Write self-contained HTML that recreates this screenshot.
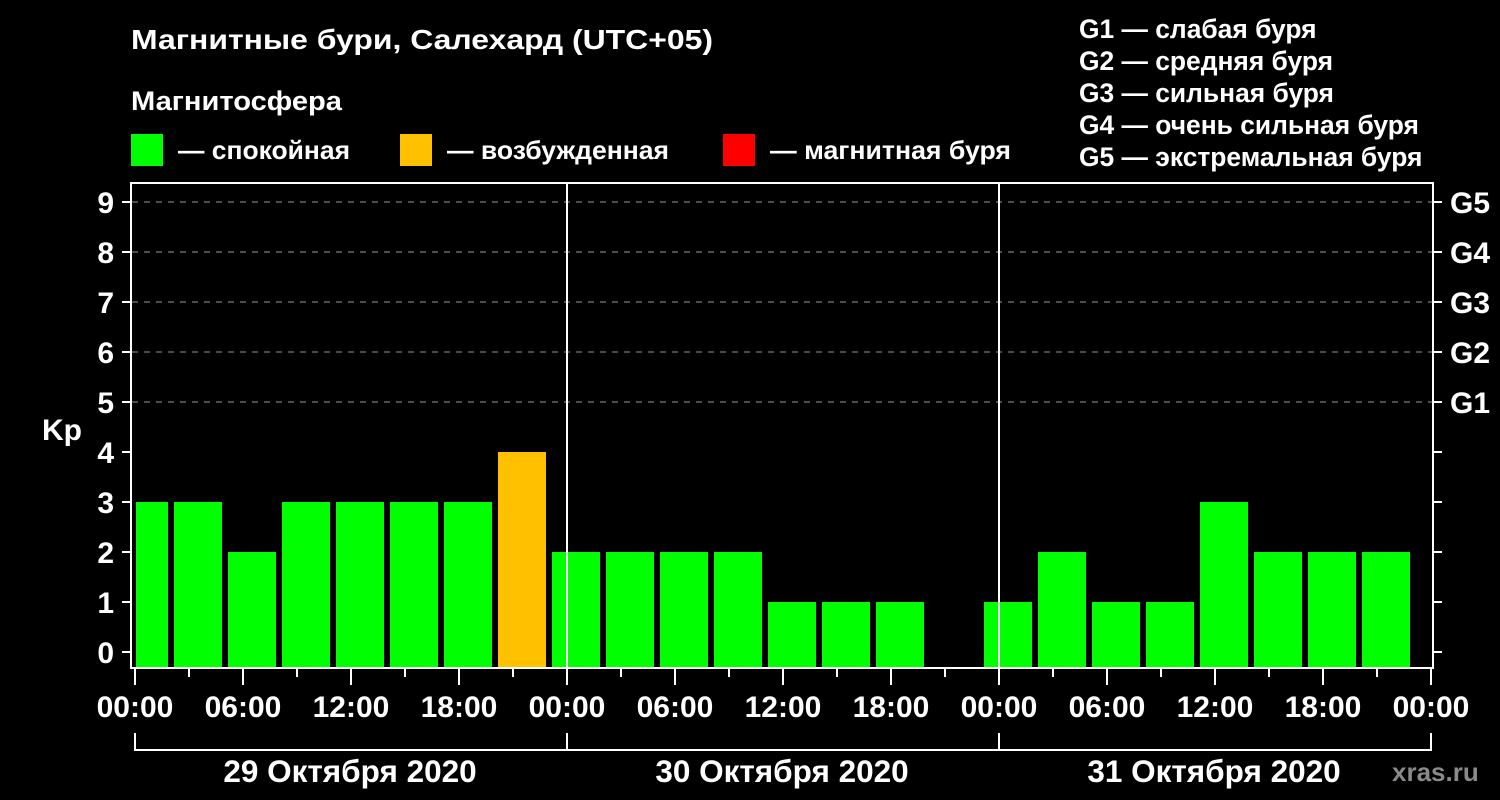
<!DOCTYPE html><html><head><meta charset="utf-8"><style>body{margin:0;background:#000}svg{display:block}text{font-family:"Liberation Sans",Arial,sans-serif;font-weight:bold;fill:#fff}</style></head><body>
<svg width="1500" height="800" viewBox="0 0 1500 800">
<rect width="1500" height="800" fill="#000"/>
<text x="131" y="49" font-size="28" textLength="582" lengthAdjust="spacingAndGlyphs">Магнитные бури, Салехард (UTC+05)</text>
<text x="131" y="110" font-size="27" textLength="211" lengthAdjust="spacingAndGlyphs">Магнитосфера</text>
<rect x="131" y="134" width="32" height="32" fill="#00ff00"/><text x="178" y="159" font-size="26" textLength="172" lengthAdjust="spacingAndGlyphs">— спокойная</text>
<rect x="400" y="134" width="32" height="32" fill="#ffc000"/><text x="447" y="159" font-size="26" textLength="222" lengthAdjust="spacingAndGlyphs">— возбужденная</text>
<rect x="723" y="134" width="32" height="32" fill="#ff0000"/><text x="770" y="159" font-size="26" textLength="241" lengthAdjust="spacingAndGlyphs">— магнитная буря</text>
<g font-size="26.4"><text x="1079" y="38">G1 — слабая буря</text><text x="1079" y="70">G2 — средняя буря</text><text x="1079" y="102">G3 — сильная буря</text><text x="1079" y="134">G4 — очень сильная буря</text><text x="1079" y="166">G5 — экстремальная буря</text></g>
<g stroke="#999" stroke-width="1" stroke-dasharray="6,6"><line x1="132" x2="1432" y1="202" y2="202"/><line x1="132" x2="1432" y1="252" y2="252"/><line x1="132" x2="1432" y1="302" y2="302"/><line x1="132" x2="1432" y1="352" y2="352"/><line x1="132" x2="1432" y1="402" y2="402"/></g>
<g fill="#00ff00">
<rect x="136" y="502" width="32" height="166"/><rect x="174" y="502" width="48" height="166"/><rect x="228" y="552" width="48" height="116"/><rect x="282" y="502" width="48" height="166"/><rect x="336" y="502" width="48" height="166"/><rect x="390" y="502" width="48" height="166"/><rect x="444" y="502" width="48" height="166"/>
<rect x="552" y="552" width="48" height="116"/><rect x="606" y="552" width="48" height="116"/><rect x="660" y="552" width="48" height="116"/><rect x="714" y="552" width="48" height="116"/><rect x="768" y="602" width="48" height="66"/><rect x="822" y="602" width="48" height="66"/><rect x="876" y="602" width="48" height="66"/>
<rect x="984" y="602" width="48" height="66"/><rect x="1038" y="552" width="48" height="116"/><rect x="1092" y="602" width="48" height="66"/><rect x="1146" y="602" width="48" height="66"/><rect x="1200" y="502" width="48" height="166"/><rect x="1254" y="552" width="48" height="116"/><rect x="1308" y="552" width="48" height="116"/><rect x="1362" y="552" width="48" height="116"/>
</g>
<rect x="498" y="452" width="48" height="216" fill="#ffc000"/>
<g stroke="#fff" stroke-width="2" fill="none">
<rect x="131" y="183" width="1302" height="485"/>
<line x1="567" y1="183" x2="567" y2="668"/><line x1="999" y1="183" x2="999" y2="668"/>
<path d="M122 202h9M122 252h9M122 302h9M122 352h9M122 402h9M122 452h9M122 502h9M122 552h9M122 602h9M122 652h9"/>
<path d="M1433 202h9M1433 252h9M1433 302h9M1433 352h9M1433 402h9M1433 452h9M1433 502h9M1433 552h9M1433 602h9M1433 652h9"/>
<path d="M135 668v17M189 668v9M243 668v17M297 668v9M351 668v17M405 668v9M459 668v17M513 668v9M567 668v17M621 668v9M675 668v17M729 668v9M783 668v17M837 668v9M891 668v17M945 668v9M999 668v17M1053 668v9M1107 668v17M1161 668v9M1215 668v17M1269 668v9M1323 668v17M1377 668v9M1431 668v17"/>
<path d="M135 733v17h1296v-17M567 733v17M999 733v17"/>
</g>
<g font-size="30" text-anchor="end"><text x="114" y="213">9</text><text x="114" y="263">8</text><text x="114" y="313">7</text><text x="114" y="363">6</text><text x="114" y="413">5</text><text x="114" y="463">4</text><text x="114" y="513">3</text><text x="114" y="563">2</text><text x="114" y="613">1</text><text x="114" y="663">0</text></g>
<text x="42" y="440" font-size="30">Kp</text>
<g font-size="30"><text x="1450" y="213">G5</text><text x="1450" y="263">G4</text><text x="1450" y="313">G3</text><text x="1450" y="363">G2</text><text x="1450" y="413">G1</text></g>
<g font-size="30" text-anchor="middle"><text x="135" y="717">00:00</text><text x="243" y="717">06:00</text><text x="351" y="717">12:00</text><text x="459" y="717">18:00</text><text x="567" y="717">00:00</text><text x="675" y="717">06:00</text><text x="783" y="717">12:00</text><text x="891" y="717">18:00</text><text x="999" y="717">00:00</text><text x="1107" y="717">06:00</text><text x="1215" y="717">12:00</text><text x="1323" y="717">18:00</text><text x="1431" y="717">00:00</text></g>
<g font-size="31.5" text-anchor="middle"><text x="350" y="782">29 Октября 2020</text><text x="782" y="782">30 Октября 2020</text><text x="1214" y="782">31 Октября 2020</text></g>
<text x="1392" y="781" font-size="26" style="fill:#8a8a8a">xras.ru</text>
</svg></body></html>
